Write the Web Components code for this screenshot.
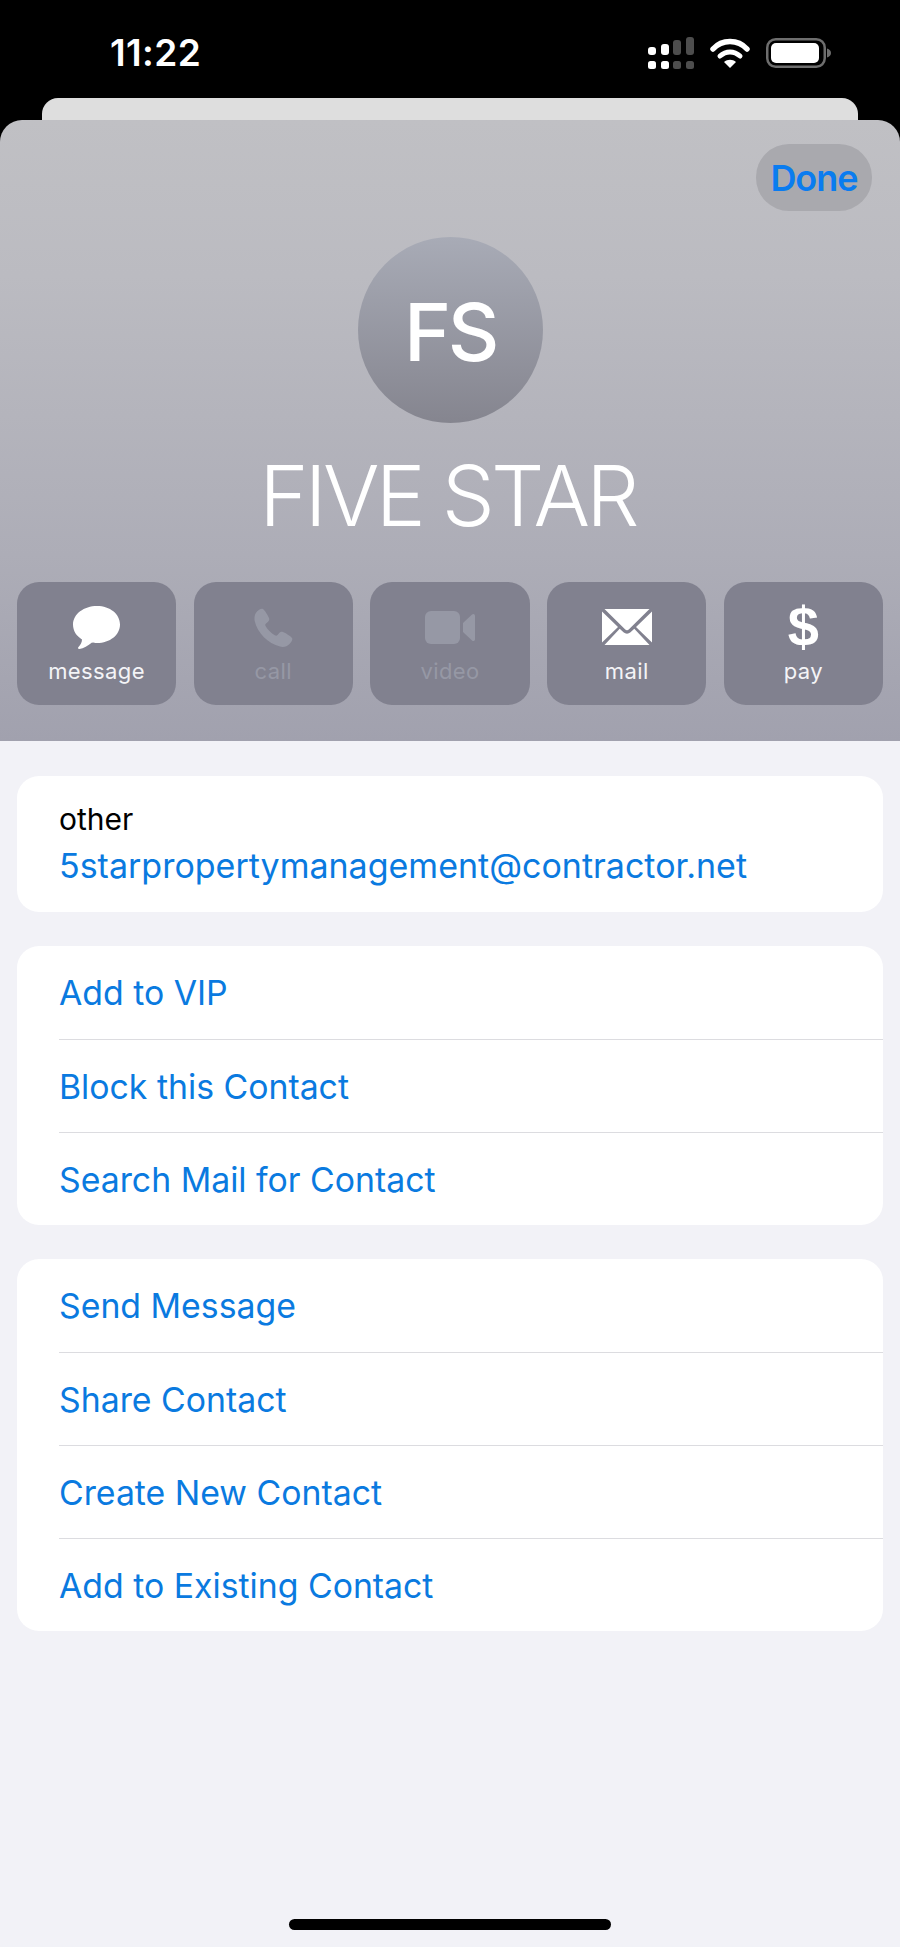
<!DOCTYPE html>
<html lang="en">
<head>
<meta charset="utf-8">
<title>Five Star</title>
<style>
  html, body { margin: 0; padding: 0; background: #000; }
  body { width: 900px; height: 1947px; overflow: hidden; font-family: Inter, "Liberation Sans", sans-serif; }
</style>
</head>
<body>
<contact-screen>
  <status-bar slot="top" time="11:22"></status-bar>
  <contact-header name="FIVE STAR" initials="FS" slot="top">
    <action-button label="message" icon="message"></action-button>
    <action-button label="call" icon="call" disabled></action-button>
    <action-button label="video" icon="video" disabled></action-button>
    <action-button label="mail" icon="mail"></action-button>
    <action-button label="pay" icon="pay"></action-button>
  </contact-header>
  <list-card>
    <email-row label="other" value="5starpropertymanagement@contractor.net"></email-row>
  </list-card>
  <list-card>
    <link-row>Add to VIP</link-row>
    <link-row>Block this Contact</link-row>
    <link-row>Search Mail for Contact</link-row>
  </list-card>
  <list-card>
    <link-row>Send Message</link-row>
    <link-row>Share Contact</link-row>
    <link-row>Create New Contact</link-row>
    <link-row>Add to Existing Contact</link-row>
  </list-card>
</contact-screen>

<script>
const ICONS = {
  message: `<svg width="47" height="43" viewBox="0 0 47 43"><path fill="currentColor" d="M24 0C37 0 47 8 47 18.500S37 37 24 37c-2 0-3.500 0-5-.4C15 40 10.500 42.500 6.500 43 5 43 4.500 42 5.500 41 7.500 39 9 36 9 33.500 3.500 30 0 25 0 18.500 0 8 11 0 24 0z"/></svg>`,
  call: `<svg width="39" height="39" viewBox="0 0 39 39"><path fill="currentColor" d="M3 3.500C5 1.500 7.500 0 9 1c2 1.500 5 6.500 6 9 .7 1.700 0 3-1.500 4.200L12 15.500c-1 .8-1 1.500-.3 2.700C14 22 17 25 20.800 27.300c1.200.7 1.900.7 2.700-.3l1.300-1.500c1.200-1.500 2.500-2.200 4.200-1.500 2.500 1 7.500 4 9 6 1 1.500-.5 4-2.500 6-2.500 2.500-6 3.500-9.500 2.500C14 35.500 3.500 25 .7 13 0 9.500.8 5.700 3 3.500z"/></svg>`,
  video: `<svg width="50" height="33" viewBox="0 0 50 33"><rect width="35" height="33" rx="6" fill="currentColor"/><path fill="currentColor" d="M38 12l9-8.500c1.300-1.100 3-.5 3 1.500v23c0 2-1.700 2.600-3 1.500L38 21z"/></svg>`,
  mail: `<svg width="50" height="36" viewBox="0 0 50 36"><path fill="currentColor" d="M2.500 0h45L27 20.300c-1.200 1.200-2.800 1.200-4 0zM0 2.500 16 18 0 33.500zM50 2.500 34 18l16 15.500zM2.500 36 17.700 19.700l3.800 3.600c2 1.900 5 1.900 7 0l3.800-3.600L47.500 36z"/></svg>`
};

class ContactScreen extends HTMLElement {
  constructor() {
    super();
    this.attachShadow({ mode: "open" });
    this.shadowRoot.innerHTML = `
    <style>
      :host { display: flex; flex-direction: column; width: 900px; height: 1947px; background: #000; }
      .sheet { flex: 1; display: flex; flex-direction: column; background: #f2f2f7; }
      .lists { display: flex; flex-direction: column; gap: 34px; padding: 35px 17px 0; flex: 1; }
      .home { height: 11px; margin: 0 auto 17px; width: 322px; border-radius: 6px; background: #000; }
    </style>
    <slot name="top"></slot>
    <div class="sheet">
      <div class="lists"><slot></slot></div>
      <div class="home"></div>
    </div>`;
  }
}

class StatusBar extends HTMLElement {
  constructor() {
    super();
    this.attachShadow({ mode: "open" });
  }
  connectedCallback() {
    const bars = [[0, 8, 1], [13, 11, 1], [25, 15, .3], [38, 18, .3]];
    this.shadowRoot.innerHTML = `
    <style>
      :host { display: block; background: #000; }
      .bar { height: 98px; display: flex; align-items: center; padding: 8px 68px 0 110px; box-sizing: border-box; }
      .time { color: #fff; font: 600 37px/40px Inter, "Liberation Sans", sans-serif; letter-spacing: .4px; flex: 1; }
      .icons { display: flex; align-items: center; gap: 16px; }
      .peek { height: 22px; margin: 0 42px; background: #dedede; border-radius: 16px 16px 0 0; }
      svg { display: block; }
    </style>
    <div class="bar">
      <div class="time">${this.getAttribute("time")}</div>
      <div class="icons">
        <svg width="46" height="32" viewBox="0 0 46 32">
          ${bars.map(([x, h, o]) => `<g fill="#fff" opacity="${o}"><rect x="${x}" y="${18 - h}" width="8" height="${h}" rx="3"/><rect x="${x}" y="24" width="8" height="8" rx="2.500"/></g>`).join("")}
        </svg>
        <svg width="40" height="30" viewBox="0 0 40 30">
          <path d="M3 11C12 1 28 1 37 11" fill="none" stroke="#fff" stroke-width="5.500" stroke-linecap="round"/>
          <path d="M10 18c6-5.500 14-5.500 20 0" fill="none" stroke="#fff" stroke-width="5" stroke-linecap="round"/>
          <path d="M14 24c3.500-3 8.500-3 12 0l-6 6z" fill="#fff"/>
        </svg>
        <svg width="66" height="30" viewBox="0 0 66 30">
          <rect x="1.250" y="1.250" width="57.500" height="27.500" rx="8.500" fill="none" stroke="#6e6e6e" stroke-width="2.500"/>
          <rect x="5" y="5" width="48" height="20" rx="5" fill="#fff"/>
          <path d="M61 10.500c2.500.7 4 2.200 4 4.500s-1.500 3.800-4 4.500z" fill="#6e6e6e"/>
        </svg>
      </div>
    </div>
    <div class="peek"></div>`;
  }
}

class ContactHeader extends HTMLElement {
  constructor() {
    super();
    this.attachShadow({ mode: "open" });
  }
  connectedCallback() {
    this.shadowRoot.innerHTML = `
    <style>
      :host { display: block; background: #000; }
      .head {
        height: 621px; box-sizing: border-box; padding: 24px 17px 36px;
        display: flex; flex-direction: column; align-items: center;
        border-radius: 22px 22px 0 0;
        background: linear-gradient(#c0c0c4, #bbbbc1 25%, #adadb7 70%, #a1a1ae);
      }
      .done-wrap { align-self: stretch; display: flex; justify-content: flex-end; padding-right: 11px; }
      .done {
        width: 116px; height: 67px; border-radius: 33px; background: #a9a9ae;
        display: flex; align-items: center; justify-content: center;
        color: #0a7cf0; font: 600 36px/40px Inter, "Liberation Sans", sans-serif; letter-spacing: -1px;
      }
      .avatar {
        width: 185px; height: 186px; border-radius: 50%; margin-top: 26px; padding-top: 4px; box-sizing: border-box;
        background: linear-gradient(#a8abb6, #85858f);
        display: flex; align-items: center; justify-content: center;
        color: #fff; font: 500 80px/1 Inter, "Liberation Sans", sans-serif; letter-spacing: -3.500px;
      }
      .name {
        margin: 22px 5px 0 0; color: #fff; font: 350 84px/102px Inter, "Liberation Sans", sans-serif; letter-spacing: -3.800px;
      }
      .actions { margin-top: auto; align-self: stretch; display: grid; grid-template-columns: repeat(5, 1fr); gap: 17.500px; }
    </style>
    <div class="head">
      <div class="done-wrap"><div class="done">Done</div></div>
      <div class="avatar">${this.getAttribute("initials")}</div>
      <div class="name">${this.getAttribute("name")}</div>
      <div class="actions"><slot></slot></div>
    </div>`;
  }
}

class ActionButton extends HTMLElement {
  constructor() {
    super();
    this.attachShadow({ mode: "open" });
  }
  connectedCallback() {
    const icon = this.getAttribute("icon");
    const off = this.hasAttribute("disabled");
    const glyph = icon === "pay" ? `<span class="dollar">$</span>` : ICONS[icon];
    this.shadowRoot.innerHTML = `
    <style>
      :host { display: block; }
      .btn {
        height: 123px; border-radius: 22px; background: #81818f;
        display: flex; flex-direction: column; align-items: center;
        color: ${off ? "#9698a5" : "#fff"};
      }
      .icon { height: 62px; margin-top: 14px; display: flex; align-items: center; justify-content: center; }
      .dollar { font: 700 56px/62px "Liberation Sans", Inter, sans-serif; }
      .label { font: 400 22px/26px Inter, "Liberation Sans", sans-serif; letter-spacing: .4px; color: ${off ? "#9698a5" : "#f4f4f7"}; }
    </style>
    <div class="btn">
      <div class="icon">${glyph}</div>
      <div class="label">${this.getAttribute("label")}</div>
    </div>`;
  }
}

class ListCard extends HTMLElement {
  constructor() {
    super();
    this.attachShadow({ mode: "open" });
    this.shadowRoot.innerHTML = `
    <style>
      :host { display: block; background: #fff; border-radius: 22px; overflow: hidden; }
    </style>
    <slot></slot>`;
  }
}

class EmailRow extends HTMLElement {
  constructor() {
    super();
    this.attachShadow({ mode: "open" });
  }
  connectedCallback() {
    this.shadowRoot.innerHTML = `
    <style>
      :host { display: block; height: 136px; box-sizing: border-box; padding: 23px 42px 0; }
      .label { color: #000; font: 400 30px/40px Inter, "Liberation Sans", sans-serif; }
      .value { color: #0a7ae0; font: 400 34px/46px Inter, "Liberation Sans", sans-serif; white-space: nowrap; margin-top: 4px; }
    </style>
    <div class="label">${this.getAttribute("label")}</div>
    <div class="value">${this.getAttribute("value")}</div>`;
  }
}

class LinkRow extends HTMLElement {
  constructor() {
    super();
    this.attachShadow({ mode: "open" });
    this.shadowRoot.innerHTML = `
    <style>
      :host { display: block; margin-left: 42px; height: 93px; box-sizing: border-box; border-top: 1.500px solid #dcdce0; }
      :host(:first-child) { border-top: 0; }
      .row { height: 100%; box-sizing: border-box; padding-top: 1px; display: flex; align-items: center; color: #0a7ae0; font: 400 33.800px/1 Inter, "Liberation Sans", sans-serif; }
    </style>
    <div class="row"><slot></slot></div>`;
  }
}

customElements.define("contact-screen", ContactScreen);
customElements.define("status-bar", StatusBar);
customElements.define("contact-header", ContactHeader);
customElements.define("action-button", ActionButton);
customElements.define("list-card", ListCard);
customElements.define("email-row", EmailRow);
customElements.define("link-row", LinkRow);
</script>
</body>
</html>
